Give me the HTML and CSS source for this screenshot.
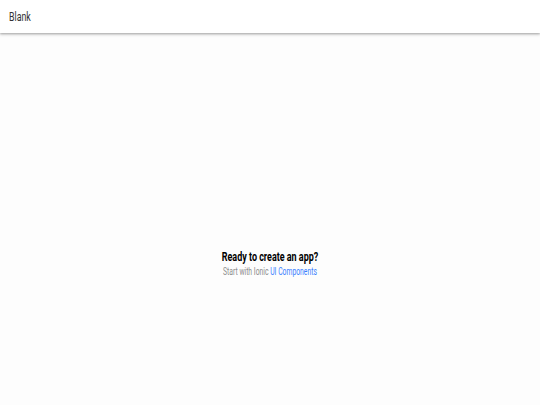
FILE: index.html
```html
<!DOCTYPE html>
<html lang="en">

<head>
    <meta charset="UTF-8">
    <meta name="viewport" content="width=device-width, initial-scale=1.0">
    <title>Blank</title>
    <link rel="stylesheet" href="styles.css">
</head>

<body>
    <div class="app">
        <header class="toolbar">
            <span class="title">Blank</span>
        </header>
        <main class="content">
            <div id="container">
                <strong>Ready to create an app?</strong>
                <p>Start with Ionic <a href="#">UI Components</a></p>
            </div>
        </main>
    </div>
</body>

</html>
```

FILE: styles.css
```css
* {
    padding: 0;
    margin: 0;
    box-sizing: border-box;
}

html,
body {
    height: 100%;
}

body {
    font-family: Roboto, "Liberation Sans", sans-serif;
    background: #fdfdfd;
    color: #000;
}

.app {
    height: 100%;
    display: flex;
    flex-direction: column;
}

.toolbar {
    height: 33px;
    padding-left: 9px;
    display: flex;
    align-items: center;
    background: #fff;
    box-shadow: 0 1px 2px rgba(0, 0, 0, 0.25), 0 2px 3px rgba(0, 0, 0, 0.12);
    position: relative;
    z-index: 1;
}

.title {
    font-size: 13px;
    color: #333;
    transform: scaleX(0.68);
    transform-origin: left center;
}

.content {
    flex: 1;
    display: flex;
    flex-direction: column;
    justify-content: flex-start;
    padding-top: 216px;
}

#container {
    text-align: center;
}

#container strong {
    display: block;
    font-size: 13px;
    line-height: 15px;
    transform: scaleX(0.69);
}

#container p {
    margin-top: 1px;
    font-size: 10px;
    line-height: 13px;
    color: #8c8c8c;
    transform: scaleX(0.68);
}

#container a {
    color: #3880ff;
    text-decoration: none;
}
```
